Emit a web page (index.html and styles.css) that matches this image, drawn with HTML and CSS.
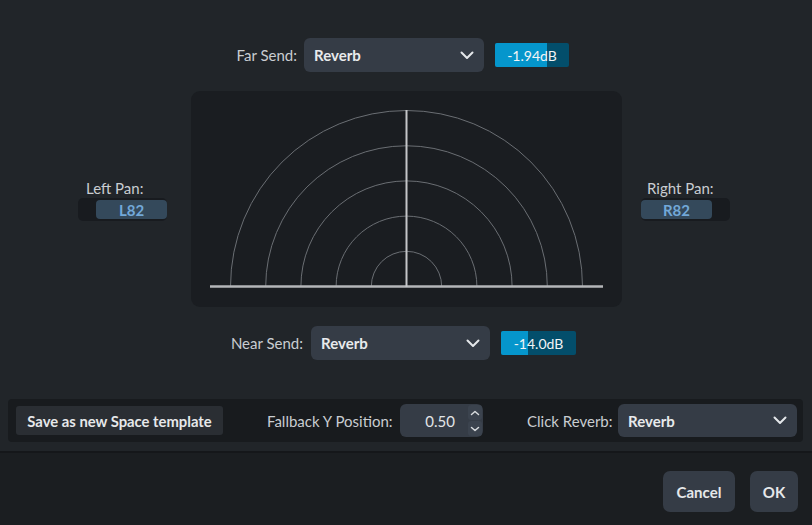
FILE: index.html
```html
<!DOCTYPE html>
<html>
<head>
<meta charset="utf-8">
<link rel="stylesheet" href="styles.css">
</head>
<body>
<div class="dialog">
  <div class="main">
    <div class="send-row far">
      <span class="label send-label">Far Send:</span>
      <div class="dropdown send-dd">
        <span>Reverb</span>
        <svg class="chev" width="14" height="9" viewBox="0 0 14 9"><path d="M1.5 1.5 L7 7 L12.5 1.5" fill="none" stroke="#e4e7ea" stroke-width="2" stroke-linecap="round" stroke-linejoin="round"/></svg>
      </div>
      <div class="meter"><div class="fill" style="width:70%"></div><span>-1.94dB</span></div>
    </div>

    <div class="stage">
      <div class="pan left">
        <span class="label pan-label">Left Pan:</span>
        <div class="pan-box"><div class="pan-val lv">L82</div></div>
      </div>
      <div class="panel">
        <svg width="431" height="216" viewBox="0 0 431 216">
          <g fill="none" stroke="#6a6e73" stroke-width="1">
            <path d="M39.5 195.5 A176 176 0 0 1 391.5 195.5"/>
            <path d="M74.7 195.5 A140.8 140.8 0 0 1 356.3 195.5"/>
            <path d="M109.9 195.5 A105.6 105.6 0 0 1 321.1 195.5"/>
            <path d="M145.1 195.5 A70.4 70.4 0 0 1 285.9 195.5"/>
            <path d="M180.3 195.5 A35.2 35.2 0 0 1 250.7 195.5"/>
          </g>
          <line x1="19" y1="195.5" x2="412" y2="195.5" stroke="#b4b6b9" stroke-width="2.5"/>
          <line x1="215.5" y1="19" x2="215.5" y2="196" stroke="#c4c6c9" stroke-width="2"/>
        </svg>
      </div>
      <div class="pan right">
        <span class="label pan-label">Right Pan:</span>
        <div class="pan-box"><div class="pan-val rv">R82</div></div>
      </div>
    </div>

    <div class="send-row near">
      <span class="label send-label">Near Send:</span>
      <div class="dropdown send-dd">
        <span>Reverb</span>
        <svg class="chev" width="14" height="9" viewBox="0 0 14 9"><path d="M1.5 1.5 L7 7 L12.5 1.5" fill="none" stroke="#e4e7ea" stroke-width="2" stroke-linecap="round" stroke-linejoin="round"/></svg>
      </div>
      <div class="meter"><div class="fill" style="width:36%"></div><span>-14.0dB</span></div>
    </div>

    <div class="bar">
      <button class="save-btn">Save as new Space template</button>
      <span class="label fb-label">Fallback Y Position:</span>
      <div class="spin">
        <span class="spin-val">0.50</span>
        <div class="spin-arrows">
          <div class="arrow"><svg width="10" height="6" viewBox="0 0 10 6"><path d="M1.5 4.5 L5 1.5 L8.5 4.5" fill="none" stroke="#d8dbde" stroke-width="1.5" stroke-linecap="round" stroke-linejoin="round"/></svg></div>
          <div class="arrow"><svg width="10" height="6" viewBox="0 0 10 6"><path d="M1.5 1.5 L5 4.5 L8.5 1.5" fill="none" stroke="#d8dbde" stroke-width="1.5" stroke-linecap="round" stroke-linejoin="round"/></svg></div>
        </div>
      </div>
      <span class="label cr-label">Click Reverb:</span>
      <div class="dropdown cr-dd">
        <span>Reverb</span>
        <svg class="chev" width="14" height="9" viewBox="0 0 14 9"><path d="M1.5 1.5 L7 7 L12.5 1.5" fill="none" stroke="#e4e7ea" stroke-width="2" stroke-linecap="round" stroke-linejoin="round"/></svg>
      </div>
    </div>
  </div>
  <div class="footer">
    <button class="btn cancel">Cancel</button>
    <button class="btn ok">OK</button>
  </div>
</div>
</body>
</html>
```

FILE: styles.css
```css
* { box-sizing: border-box; }
html, body { margin: 0; padding: 0; background: #212529; }
body {
  font-family: Lato, "Noto Sans", sans-serif;
  font-size: 14.5px;
  color: #c9cdd1;
}
.dialog {
  width: 812px;
  height: 525px;
  display: flex;
  flex-direction: column;
  background: #212529;
}
.main {
  height: 451px;
  display: flex;
  flex-direction: column;
}
.label { color: #c9cdd1; white-space: nowrap; font-size: 15px; }

.send-row {
  display: flex;
  align-items: center;
  height: 34px;
}
.send-row.far { margin-top: 38px; padding-left: 200px; }
.send-row.near { margin-top: 19px; padding-left: 205px; }
.send-label { width: 97px; text-align: right; }
.send-row.near .send-label { width: 98px; }
.send-row.far .dropdown { margin-left: 7px; }
.send-row.near .dropdown { margin-left: 8px; }

.dropdown {
  display: flex;
  align-items: center;
  justify-content: space-between;
  background: #353c46;
  border-radius: 6px;
  color: #e8eaec;
  font-weight: 700;
  font-size: 15px;
  padding: 0 10px 0 10px;
}
.send-dd { width: 180px; height: 34px; }
.send-row.near .send-dd { width: 179px; }
.chev { display: block; }

.meter {
  position: relative;
  width: 74px;
  height: 24px;
  background: #034e6b;
  border-radius: 2px;
  margin-left: 11px;
  overflow: hidden;
  display: flex;
  align-items: center;
  justify-content: center;
  color: #f2f4f6;
  font-size: 14px;
}
.send-row.near .meter { width: 75px; }
.meter .fill {
  position: absolute;
  left: 0; top: 0; bottom: 0;
  background: #0596cc;
}
.meter span { position: relative; }

.stage {
  display: flex;
  margin-top: 19px;
  height: 216px;
}
.pan {
  display: flex;
  flex-direction: column;
  padding-top: 87px;
}
.pan.left { margin-left: 78px; width: 89px; }
.pan.right { margin-left: 19px; width: 89px; }
.pan-label { height: 20px; line-height: 20px; }
.pan.left .pan-label { padding-left: 8px; }
.pan.right .pan-label { padding-left: 6px; }
.pan-box {
  width: 89px;
  height: 23px;
  background: #181b1f;
  border-radius: 5px;
  display: flex;
  align-items: center;
}
.pan-val {
  height: 19px;
  background: #34495b;
  border-radius: 4px;
  color: #72a8d8;
  font-weight: 700;
  font-size: 15px;
  display: flex;
  align-items: center;
  justify-content: center;
}
.pan-val.lv { margin-left: 18px; width: 71px; }
.pan-val.rv { margin-left: 0; width: 71px; }
.panel {
  margin-left: 24px;
  width: 431px;
  height: 216px;
  background: #1a1d21;
  border-radius: 9px;
}
.panel svg { display: block; }

.bar {
  margin: 39px 0 0 8px;
  width: 795px;
  height: 43px;
  background: #181b1e;
  border-radius: 4px;
  display: flex;
  align-items: center;
  padding-left: 8px;
}
.save-btn {
  width: 207px;
  height: 29px;
  background: #2a2e33;
  border: none;
  border-radius: 3px;
  color: #e6e8ea;
  font-family: inherit;
  font-size: 14.8px;
  font-weight: 700;
  padding: 0;
}
.fb-label { margin-left: 44px; width: 123px; }
.spin {
  margin-left: 10px;
  width: 83px;
  height: 33px;
  background: #353c46;
  border-radius: 6px;
  display: flex;
  align-items: center;
  justify-content: flex-end;
}
.spin-val { color: #e2e5e8; margin-right: 13px; font-size: 15px; }
.spin-arrows {
  display: flex;
  flex-direction: column;
  gap: 1px;
  margin-right: 1px;
}
.arrow {
  width: 14px;
  height: 15px;
  background: #3b434e;
  border-radius: 3px;
  display: flex;
  align-items: center;
  justify-content: center;
}
.arrow svg { display: block; }
.cr-label { margin-left: 44px; width: 83px; }
.cr-dd { margin-left: 8px; width: 179px; height: 33px; }

.footer {
  flex: 1;
  background: #1b1e21;
  border-top: 2px solid #15171a;
  display: flex;
  justify-content: flex-end;
  align-items: flex-start;
  padding: 18px 14px 0 0;
  gap: 15px;
}
.btn {
  height: 41px;
  background: #353c46;
  border: none;
  border-radius: 7px;
  color: #e6e8ea;
  font-family: inherit;
  font-size: 15px;
  font-weight: 700;
  padding: 0;
}
.btn.cancel { width: 72px; }
.btn.ok { width: 48px; }
```
